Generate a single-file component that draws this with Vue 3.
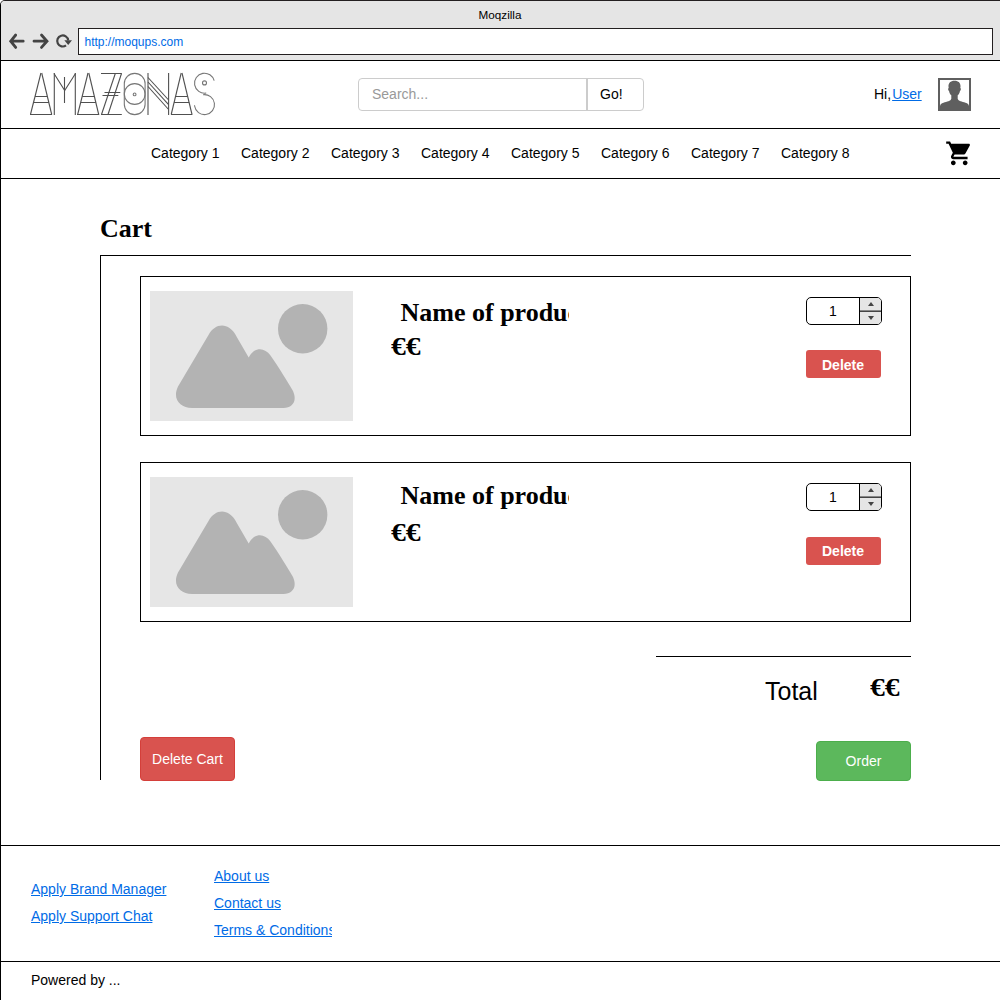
<script setup>
import { ref } from 'vue'

const categories = Array.from({ length: 8 }, (_, i) => `Category ${i + 1}`)

const items = ref([
  { id: 1, name: 'Name of product', price: '€€', qty: 1 },
  { id: 2, name: 'Name of product', price: '€€', qty: 1 },
])

const brandLinks = ['Apply Brand Manager', 'Apply Support Chat']
const infoLinks = ['About us', 'Contact us', 'Terms & Conditions']
</script>

<template>
  <div class="window">
    <div class="chrome">
      <div class="title">Moqzilla</div>
      <div class="toolbar">
        <svg class="controls" width="77" height="28" viewBox="0 0 77 28" fill="none" stroke="#444" stroke-width="2.800">
          <path d="M22.200 13.200H10M14.700 7l-5 6.200 5 6.200" stroke-linecap="round" />
          <path d="M33 13.200h12.500M40.500 7l5.500 6.200-5.500 6.200" stroke-linecap="round" />
          <path d="M65 17.400A5.500 5.500 0 1 1 67.200 12.300" stroke-width="2.200" />
          <path d="M63.300 12.200h7.700l-3.800 4.800z" fill="#444" stroke="none" />
        </svg>
        <div class="address">http://moqups.com</div>
      </div>
    </div>

    <header class="header">
      <svg class="logo" width="188" height="44" viewBox="29 72 188 44" fill="none" stroke="#505050" stroke-width="1.100">
        <g>
          <line x1="40.900" y1="73" x2="30.500" y2="114.500" />
          <line x1="41.700" y1="73" x2="51.700" y2="114.500" />
          <line x1="30" y1="114.500" x2="52" y2="114.500" />
          <line x1="35" y1="96.500" x2="47.500" y2="96.500" />
          <line x1="33.500" y1="102.500" x2="49" y2="102.500" />
        </g>
        <g>
          <line x1="54.300" y1="73" x2="54.300" y2="115" />
          <line x1="75.300" y1="73" x2="75.300" y2="115" />
          <polyline points="54,73.500 64.700,90.500 75.500,73.500" />
          <line x1="64.500" y1="77" x2="64.500" y2="103" />
        </g>
        <g>
          <line x1="88" y1="73" x2="77.700" y2="114.500" />
          <line x1="88.800" y1="73" x2="98.700" y2="114.500" />
          <line x1="77" y1="114.500" x2="99.200" y2="114.500" />
          <line x1="82.200" y1="96.500" x2="94.500" y2="96.500" />
          <line x1="80.700" y1="102.500" x2="96" y2="102.500" />
        </g>
        <g>
          <line x1="101" y1="73.500" x2="121.800" y2="73.500" />
          <line x1="101" y1="114.500" x2="121.800" y2="114.500" />
          <line x1="115.300" y1="73.500" x2="101.500" y2="114.500" />
          <line x1="121.500" y1="73.500" x2="108" y2="114.500" />
          <line x1="104.500" y1="92.500" x2="120.300" y2="92.500" />
          <line x1="102.500" y1="95.500" x2="118.300" y2="95.500" />
        </g>
        <g stroke="#777">
          <rect x="124.300" y="73.400" width="20.800" height="41.200" rx="10.400" />
          <circle cx="134.700" cy="94" r="10.400" />
          <circle cx="134.600" cy="94.400" r="1.400" />
        </g>
        <g>
          <line x1="148" y1="73" x2="148" y2="115" />
          <line x1="168.600" y1="73" x2="168.600" y2="115" />
          <line x1="148" y1="77.500" x2="168.600" y2="100" />
          <line x1="148" y1="82" x2="168.600" y2="104.700" />
          <line x1="148" y1="86.500" x2="168.600" y2="109.500" />
        </g>
        <g>
          <line x1="181.200" y1="73" x2="171.200" y2="114.500" />
          <line x1="182" y1="73" x2="192" y2="114.500" />
          <line x1="171" y1="114.500" x2="192.300" y2="114.500" />
          <line x1="175.700" y1="96.500" x2="187.800" y2="96.500" />
          <line x1="174" y1="102.500" x2="189.200" y2="102.500" />
        </g>
        <g stroke="#777">
          <circle cx="204.500" cy="83.200" r="10" pathLength="4" stroke-dasharray="2.950 1.050" transform="rotate(80 204.500 83.200)" />
          <circle cx="204.500" cy="104.600" r="10" pathLength="4" stroke-dasharray="3.050 .950" transform="rotate(-98 204.500 104.600)" />
          <circle cx="204.500" cy="82.900" r="2" />
        </g>
      </svg>
      <div class="search">
        <div class="search-field">Search...</div>
        <div class="search-go">Go!</div>
      </div>
      <div class="greeting"><span>Hi,</span><a class="link">User</a></div>
      <svg class="avatar" width="33" height="33" viewBox="0 0 33 33">
        <rect x="1" y="1" width="31" height="31" fill="#fff" stroke="#5f5f5f" stroke-width="2" />
        <path fill="#5f5f5f" d="M16.500 2.700c4 0 6.200 2.200 6 5.800l-.2 1.500c.9.200.8 2.300-.4 3.200-.4 2.100-1.300 3.300-2.200 4.100v3.400c.5 2.300 4.500 2.900 7.800 4 2 .7 3.500 1.500 3.500 3.800V32H2v-3.500c0-2.300 1.500-3.100 3.500-3.800 3.300-1.100 7.300-1.700 7.800-4v-3.400c-.9-.8-1.800-2-2.200-4.100-1.200-.9-1.300-3-.4-3.200l-.2-1.500c-.2-3.600 2-5.800 6-5.800z" />
      </svg>
    </header>

    <nav class="nav">
      <div class="categories">
        <span v-for="c in categories" :key="c" class="category">{{ c }}</span>
      </div>
      <svg class="cart-icon" width="28.500" height="28.500" viewBox="0 0 24 24">
        <path d="M7 18c-1.100 0-1.990.9-1.990 2S5.900 22 7 22s2-.9 2-2-.9-2-2-2zM1 2v2h2l3.600 7.590-1.350 2.450c-.16.280-.25.610-.25.960 0 1.100.9 2 2 2h12v-2H7.420c-.14 0-.25-.11-.25-.25l.03-.12.9-1.630h7.450c.75 0 1.410-.41 1.750-1.030l3.580-6.490c.08-.14.12-.31.12-.48 0-.55-.45-1-1-1H5.210l-.94-2H1zm16 16c-1.100 0-1.990.9-1.990 2s.89 2 1.990 2 2-.9 2-2-.9-2-2-2z" />
      </svg>
    </nav>

    <main class="main">
      <h1 class="heading">Cart</h1>
      <section class="panel">
        <article v-for="item in items" :key="item.id" class="card">
          <svg class="thumb" width="203" height="130" viewBox="0 0 203 130">
            <rect width="203" height="130" fill="#e6e6e6" />
            <circle cx="152.700" cy="37.800" r="24.700" fill="#b3b3b3" />
            <path fill="#b3b3b3" d="M42 117C30 117 22 108 28 95.500L58.500 44C65.500 31.500 79 31 86.500 45.500L98.700 66.500C104.500 55.500 114.500 56 120.500 64.500C129.500 77.500 136 88 143 100C147.500 110 142.500 117 133.500 117Z" />
          </svg>
          <div class="details">
            <h2 class="name">{{ item.name }}</h2>
            <div class="price">{{ item.price }}</div>
          </div>
          <div class="actions">
            <div class="stepper">
              <div class="qty">{{ item.qty }}</div>
              <div class="arrows">
                <div class="arrow"><svg width="6" height="4" viewBox="0 0 6 4"><path d="M0 4h6L3 0z" fill="#444" /></svg></div>
                <div class="arrow"><svg width="6" height="4" viewBox="0 0 6 4"><path d="M0 0h6L3 4z" fill="#444" /></svg></div>
              </div>
            </div>
            <div class="delete">Delete</div>
          </div>
        </article>

        <div class="total">
          <span class="total-label">Total</span>
          <span class="price total-price">€€</span>
        </div>
        <div class="buttons">
          <div class="btn danger">Delete Cart</div>
          <div class="btn success">Order</div>
        </div>
      </section>
    </main>

    <footer class="footer">
      <div class="links brand">
        <a v-for="l in brandLinks" :key="l" class="link">{{ l }}</a>
      </div>
      <div class="links info">
        <a v-for="l in infoLinks" :key="l" class="link">{{ l }}</a>
      </div>
    </footer>
    <div class="powered">Powered by ...</div>
  </div>
</template>

<style>
body {
  margin: 0;
  background: #fff;
}
</style>

<style scoped>
* {
  box-sizing: border-box;
}
.window {
  width: 1000px;
  height: 1000px;
  overflow: hidden;
  display: flex;
  flex-direction: column;
  border-left: 1px solid #000;
  border-top: 1px solid #231f20;
  border-top-left-radius: 5px;
  font: 14px/16px "Liberation Sans", Arial, sans-serif;
  color: #000;
}
.window > * {
  flex: none;
}
.chrome {
  height: 60px;
  background: #e5e5e5;
  border-bottom: 1px solid #000;
}
.title {
  height: 27px;
  line-height: 27px;
  padding-right: 1px;
  text-align: center;
  font-size: 11.700px;
}
.toolbar {
  display: flex;
}
.controls {
  flex: none;
}
.address {
  width: 915px;
  height: 27px;
  border: 1px solid #231f20;
  background: #fff;
  padding-left: 5.500px;
  line-height: 26px;
  font-size: 12px;
  color: #006be6;
}
.header {
  height: 68px;
  display: flex;
  align-items: flex-start;
  border-bottom: 1px solid #000;
}
.logo {
  margin: 11px 0 0 28px;
}
.search {
  display: flex;
  width: 286px;
  height: 33px;
  margin: 17px 0 0 141px;
  border: 1px solid #ccc;
  border-radius: 4px;
}
.search-field {
  width: 229px;
  padding-left: 13px;
  line-height: 30px;
  color: #999;
  border-right: 2px solid #ccc;
}
.search-go {
  padding-left: 12px;
  line-height: 30px;
}
.greeting {
  display: flex;
  gap: 1px;
  width: 64px;
  margin: 25px 0 0 230px;
  white-space: nowrap;
}
.link {
  color: #006be6;
  text-decoration: underline;
}
.avatar {
  margin-top: 17px;
}
.nav {
  height: 50px;
  display: flex;
  border-bottom: 1px solid #000;
}
.categories {
  display: flex;
  margin: 16px 0 0 150px;
  width: 794px;
}
.category {
  width: 90px;
}
.cart-icon {
  flex: none;
  margin-top: 9.500px;
}
.main {
  height: 667px;
  padding-left: 99px;
  border-bottom: 1px solid #000;
}
.heading,
.name {
  margin: 0;
  font: bold 26px/30px "Liberation Serif", "Times New Roman", serif;
  white-space: nowrap;
}
.heading {
  padding-top: 35px;
  height: 76px;
}
.panel {
  width: 811px;
  height: 525px;
  padding: 20px 0 0 39px;
  border-left: 1px solid #000;
  border-top: 1px solid #000;
}
.card {
  display: flex;
  height: 160px;
  margin-bottom: 26px;
  border: 1px solid #000;
}
.thumb {
  flex: none;
  margin: 14px 0 0 9px;
}
.details {
  width: 178px;
  margin: 21px 0 0 38px;
}
.name {
  margin-left: 9px;
  padding-left: 0.500px;
  height: 34px;
  overflow: hidden;
}
.card + .card .details {
  margin-top: 18px;
}
.card + .card .name {
  height: 37px;
}
.price {
  font: bold 26px/30px "Liberation Serif", "Times New Roman", serif;
  transform: scaleX(1.140);
  transform-origin: left;
}
.actions {
  width: 76px;
  margin: 20px 0 0 237px;
}
.stepper {
  display: flex;
  height: 28px;
  border: 1px solid #000;
  border-radius: 5px;
  overflow: hidden;
}
.qty {
  width: 52px;
  line-height: 27px;
  text-align: center;
}
.arrows {
  width: 22px;
  border-left: 1px solid #000;
  background: #e5e5e5;
}
.arrow {
  height: 13px;
  display: flex;
  align-items: center;
  justify-content: center;
}
.arrow + .arrow {
  border-top: 1px solid #444;
}
.arrow:first-child {
  border-bottom: 1px solid #888;
}
.delete {
  width: 75px;
  height: 28px;
  margin-top: 25px;
  padding-right: 1px;
  border-radius: 3px;
  background: #d9534f;
  color: #fff;
  font-weight: bold;
  line-height: 30px;
  text-align: center;
}
.card + .card .delete {
  margin-top: 26px;
  line-height: 28px;
}
.total {
  display: flex;
  height: 81px;
  width: 255px;
  margin: 34px 0 0 516px;
  border-top: 1px solid #000;
}
.total-label {
  width: 105px;
  margin: 19px 0 0 109px;
  font-size: 25px;
  line-height: 30px;
}
.total-price {
  height: 30px;
  margin-top: 16px;
}
.buttons {
  display: flex;
  justify-content: space-between;
  align-items: flex-end;
}
.btn {
  width: 95px;
  border: 1px solid;
  border-radius: 4px;
  color: #fff;
  text-align: center;
}
.danger {
  height: 44px;
  line-height: 42px;
  background: #d9534f;
  border-color: #d43f3a;
}
.success {
  height: 40px;
  line-height: 38px;
  background: #5cb85c;
  border-color: #4cae4c;
}
.footer {
  height: 116px;
  display: flex;
  border-bottom: 1px solid #000;
}
.links {
  display: flex;
  flex-direction: column;
  align-items: flex-start;
  gap: 11px;
  white-space: nowrap;
}
.brand {
  width: 213px;
  padding: 35px 0 0 30px;
}
.info {
  width: 118px;
  padding-top: 22px;
  overflow: hidden;
}
.powered {
  padding: 10px 0 0 30px;
}
</style>
